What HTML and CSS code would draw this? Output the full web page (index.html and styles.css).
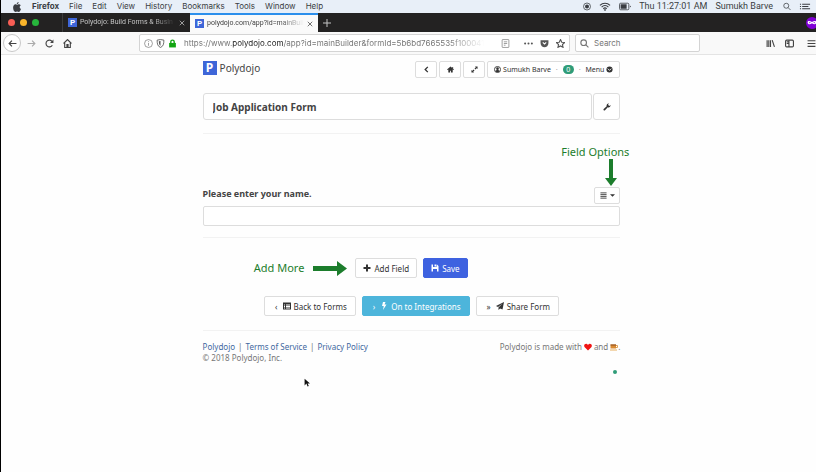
FILE: index.html
```html
<!DOCTYPE html>
<html lang="en">
<head>
  <meta charset="UTF-8" />
  <meta name="viewport" content="width=device-width, initial-scale=1.0" />
  <title>Polydojo - Form Builder</title>
  <link rel="stylesheet" href="styles.css">
</head>
<body>
  <!-- System menu bar -->
  <div class="menubar">
    <svg class="apple" viewBox="0 0 16 18"><path d="M11 0c0 2-1.500 4-3.500 4C7.500 2 9 .5 11 0zM8 5c1 0 2-1 3.500-1 1.300 0 2.500.7 3.200 1.800-2.800 1.700-2.300 5.500.5 6.700C14.300 15 13 18 11.200 18c-1.200 0-1.700-.7-3-.7s-1.800.7-3 .7C3 18 1 14.500 1 10.500 1 6.500 3 4 5.200 4 6.500 4 7.200 5 8 5z"/></svg>
    <b>Firefox</b>
    <span>File</span>
    <span>Edit</span>
    <span>View</span>
    <span>History</span>
    <span>Bookmarks</span>
    <span>Tools</span>
    <span>Window</span>
    <span>Help</span>
    <div class="menubar-right">
      <svg class="icon" viewBox="0 0 16 16"><circle cx="8" cy="8" r="7" fill="none" stroke="currentColor" stroke-width="1.500"/><circle cx="8" cy="8" r="4"/></svg>
      <svg class="icon wide" viewBox="0 0 20 16"><path d="M1 6c5-5 13-5 18 0M4 9c3.500-3.500 8.500-3.500 12 0M7 12c2-2 4-2 6 0" fill="none" stroke="currentColor" stroke-width="2"/><circle cx="10" cy="14" r="1.500"/></svg>
      <svg class="icon wide" viewBox="0 0 22 14"><rect x="1" y="1" width="17" height="12" rx="2" fill="none" stroke="currentColor" stroke-width="1.500"/><path d="M3 3h11v8H3zM20 5v4l2-2z"/></svg>
      <span>Thu 11:27:01 AM</span>
      <span class="user">Sumukh Barve</span>
      <svg class="icon" viewBox="0 0 16 16"><g fill="none" stroke="currentColor" stroke-width="1.500"><circle cx="6.500" cy="6.500" r="5"/><path d="M10 10l5 5"/></g></svg>
      <svg class="icon wide" viewBox="0 0 20 16"><path d="M1 3h2v2H1zM5 3h14v2H5zM1 7h2v2H1zM5 7h11v2H5zM1 11h2v2H1zM5 11h14v2H5z"/></svg>
    </div>
  </div>

  <!-- Browser tabs -->
  <div class="tabs">
    <div class="lights"><i class="red"></i><i class="yellow"></i><i class="green"></i></div>
    <div class="tab">
      <span class="favicon">P</span>
      <span class="tab-title">Polydojo: Build Forms &amp; Busin</span>
      <button class="close" aria-label="Close tab"><svg viewBox="0 0 8 8"><path d="M1 1l6 6M7 1L1 7"/></svg></button>
    </div>
    <div class="tab active">
      <span class="favicon">P</span>
      <span class="tab-title">polydojo.com/app?id=mainBuil</span>
      <button class="close" aria-label="Close tab"><svg viewBox="0 0 8 8"><path d="M1 1l6 6M7 1L1 7"/></svg></button>
    </div>
    <button class="new-tab" aria-label="New tab"><svg viewBox="0 0 8 8"><path d="M4 0v8M0 4h8"/></svg></button>
    <div class="private"><svg viewBox="0 0 16 8"><path d="M1 4c0-3 3-3 7-1 4-2 7-2 7 1s-4 4-7 1C5 8 1 7 1 4z" fill="#fff"/><circle cx="4.500" cy="4" r="1" fill="#8000d7"/><circle cx="11.500" cy="4" r="1" fill="#8000d7"/></svg></div>
  </div>

  <!-- Browser toolbar -->
  <div class="toolbar">
    <div class="nav">
      <button class="back" aria-label="Back"><svg class="icon line" viewBox="0 0 16 16"><path d="M15 8H2M7 3L2 8l5 5"/></svg></button>
      <button class="forward" aria-label="Forward"><svg class="icon line" viewBox="0 0 16 16"><path d="M1 8h13M9 3l5 5-5 5"/></svg></button>
      <button aria-label="Reload"><svg class="icon line" viewBox="0 0 16 16"><path d="M13 11a6 6 0 1 1 0-6"/><path d="M15 1v6H9z" fill="currentColor" stroke="none"/></svg></button>
      <button aria-label="Home"><svg class="icon line" viewBox="0 0 16 16"><path d="M1 8l7-7 7 7M3 7v8h10V7M7 15v-5h2v5"/></svg></button>
    </div>
    <div class="urlbar">
      <svg class="icon line thin" viewBox="0 0 16 16"><circle cx="8" cy="8" r="7"/><path d="M8 7v5M8 4v1.500"/></svg>
      <svg class="icon" viewBox="0 0 16 16"><path d="M2 2l6-1 6 1c0 7-1 11-6 13C3 13 2 9 2 2z" fill="none" stroke="currentColor" stroke-width="1.500"/><path d="M5 4l3-.5V12C6 11 5 8 5 4z"/></svg>
      <svg class="icon lock" viewBox="0 0 16 16"><path d="M2 7h12v8H2z"/><path d="M5 8V5a3 3 0 0 1 6 0v3" fill="none" stroke="currentColor" stroke-width="2.500"/></svg>
      <span class="url">https://www.<b>polydojo.com</b>/app?id=mainBuilder&amp;formId=5b6bd7665535f100041</span>
      <svg class="icon line thin reader" viewBox="0 0 16 16"><rect x="2" y="1" width="12" height="14" rx="1"/><path d="M5 5h6M5 8h6M5 11h3"/></svg>
      <svg class="icon" viewBox="0 0 16 16"><circle cx="2" cy="8" r="1.800"/><circle cx="8" cy="8" r="1.800"/><circle cx="14" cy="8" r="1.800"/></svg>
      <svg class="icon" viewBox="0 0 16 16"><path d="M1 2h14v5c0 10-14 10-14 0z"/><path d="M5 6l3 3 3-3" fill="none" stroke="#fff" stroke-width="2"/></svg>
      <svg class="icon line" viewBox="0 0 16 16"><path d="M8 1l2.200 4.700 5 .6-3.700 3.500 1 5L8 12.300 3.500 14.800l1-5L.8 6.300l5-.6z"/></svg>
    </div>
    <label class="search">
      <svg class="icon line" viewBox="0 0 16 16"><circle cx="6.500" cy="6.500" r="5"/><path d="M10 10l5 5"/></svg>
      <input type="text" placeholder="Search" aria-label="Search">
    </label>
    <div class="tools">
      <svg class="icon line" viewBox="0 0 16 16"><path d="M2 2v12M5 2v12M8 2v12M11 2l4 12"/></svg>
      <svg class="icon line" viewBox="0 0 16 16"><rect x="1" y="2" width="14" height="12" rx="2"/><path d="M7 2v12M3 5h3M3 8h3"/></svg>
      <svg class="icon line more" viewBox="0 0 16 16"><path d="M1 3h14M1 8h14M1 13h14"/></svg>
    </div>
  </div>

  <!-- Form builder -->
  <main>
    <header>
      <a class="brand" href="#"><span class="logo">P</span>Polydojo</a>
      <div class="header-buttons">
        <button class="btn small square" aria-label="Go back"><svg class="icon line bold" viewBox="0 0 16 16"><path d="M11 2L5 8l6 6"/></svg></button>
        <button class="btn small square" aria-label="Home"><svg class="icon" viewBox="0 0 16 16"><path d="M8 1l8 7-1 1-2-1v7H9v-4H7v4H3V8L1 9 0 8zM12 2h2v4l-2-2z"/></svg></button>
        <button class="btn small square" aria-label="Expand"><svg class="icon" viewBox="0 0 16 16"><path d="M9 1h6v6l-2-2-3 3-2-2 3-3zM1 15V9l2 2 3-3 2 2-3 3 2 2z"/></svg></button>
        <button class="btn small account">
          <svg class="icon" viewBox="0 0 16 16"><circle cx="8" cy="8" r="7" fill="none" stroke="currentColor" stroke-width="2"/><circle cx="8" cy="6" r="3"/><path d="M3 12c1-3 3-3 5-3s4 0 5 3c-3 3-7 3-10 0z"/></svg>
          <span>Sumukh Barve</span>
          <i>·</i>
          <span class="badge">0</span>
          <i>·</i>
          <span>Menu</span>
          <svg class="icon" viewBox="0 0 16 16"><circle cx="8" cy="8" r="7"/><path d="M4 6l4 4 4-4" fill="none" stroke="#fff" stroke-width="2"/></svg>
        </button>
      </div>
    </header>

    <div class="title-row">
      <input class="form-title" type="text" value="Job Application Form" aria-label="Form title">
      <button class="btn wrench" aria-label="Form settings"><svg class="icon" viewBox="0 0 16 16"><path d="M15 4a4 4 0 0 1-5.500 4.500L4 14.500a1.800 1.800 0 0 1-2.600-2.600l6-5.500A4 4 0 0 1 12 1l-2 2.500L12.500 6z"/></svg></button>
    </div>

    <section class="field">
      <div class="field-head">
        <label for="name">Please enter your name.</label>
        <div class="field-options">
          <div class="note note-options">
            <span>Field Options</span>
            <svg viewBox="0 0 12 27"><path d="M4 0h4v19h4l-6 8-6-8h4z"/></svg>
          </div>
          <button class="btn small options" aria-label="Field options">
            <svg class="icon line" viewBox="0 0 16 16"><path d="M1 2h14M1 6h14M1 10h14M1 14h14"/></svg>
            <svg class="caret" viewBox="0 0 8 4"><path d="M0 0h8L4 4z"/></svg>
          </button>
        </div>
      </div>
      <input id="name" class="answer" type="text">
    </section>

    <div class="actions">
      <div class="action-group">
        <div class="note note-add">
          <span>Add More</span>
          <svg viewBox="0 0 34 15"><path d="M0 5h24V0l10 7.500L24 15v-5H0z"/></svg>
        </div>
        <button class="btn"><svg class="icon" viewBox="0 0 16 16"><path d="M6 1h4v5h5v4h-5v5H6v-5H1V6h5z"/></svg>Add Field</button>
        <button class="btn save"><svg class="icon" viewBox="0 0 16 16"><path d="M1 1h3v5h7V1h1l3 3v11h-3v-5H4v5H1zM7 1h3v4H7z"/></svg>Save</button>
      </div>
    </div>

    <nav class="steps">
      <button class="btn step"><span>‹</span><svg class="icon" viewBox="0 0 16 16"><path d="M0 1h16v14H0zM2 5v2h2V5zm4 0v2h8V5zM2 8v2h2V8zm4 0v2h8V8zM2 11v2h2v-2zm4 0v2h8v-2z" fill-rule="evenodd"/></svg>Back to Forms</button>
      <button class="btn step next"><span>›</span><svg class="icon" viewBox="0 0 16 16"><path d="M6 0h5L9 5h4L6 16l1.500-8H4z"/></svg>On to Integrations</button>
      <button class="btn step"><span>»</span><svg class="icon" viewBox="0 0 16 16"><path d="M16 0l-3 15-5-2-3 3v-5l8-8-9 7-4-2z"/></svg>Share Form</button>
    </nav>

    <footer>
      <div>
        <div class="links"><a href="#">Polydojo</a><span>|</span><a href="#">Terms of Service</a><span>|</span><a href="#">Privacy Policy</a></div>
        <div>© 2018 Polydojo, Inc.</div>
      </div>
      <div class="made">
        Polydojo is made with
        <svg class="icon" viewBox="0 0 16 16"><path d="M8 15L1 8C-2 3 5-1 8 4c3-5 10-1 7 4z" fill="#f01414"/></svg>
        and
        <span class="coffee"><svg class="icon" viewBox="0 0 16 16"><path d="M1 3h11v8H1z" fill="#d98a32"/><path d="M12 5h3v4h-3" fill="none" stroke="#e0a050" stroke-width="2"/><path d="M1 3h11v2H1z" fill="#8a4a1c"/><path d="M0 13h14v2H0z" fill="#e8b060"/></svg>.</span>
      </div>
      <i class="status-dot"></i>
    </footer>
  </main>

  <svg class="cursor" viewBox="0 0 10 16"><path d="M1 1v11l3-3 2 5 2-1-2-4h4z"/></svg>
</body>
</html>
```
FILE: styles.css
```css
* {
  box-sizing: border-box;
}
body {
  margin: 0;
  min-height: 100vh;
  position: relative;
  border-left: 1px solid #000;
  background: #fefefe;
  color: #444;
  font-family: "Noto Sans", "Open Sans", sans-serif;
  font-size: 8px;
  line-height: 11px;
  overflow-x: hidden;
}
button, input {
  font: inherit;
  color: inherit;
}
button {
  padding: 0;
  border: none;
  background: none;
}
svg {
  display: block;
  flex: none;
  fill: currentColor;
}
.icon {
  width: 8px;
  height: 8px;
}
.icon.wide {
  width: 12px;
}
.line {
  fill: none;
  stroke: currentColor;
  stroke-width: 2;
}
.line.thin {
  stroke-width: 1;
}
.line.bold {
  stroke-width: 3;
}

/* System menu bar */
.menubar {
  display: flex;
  align-items: center;
  gap: 10px;
  height: 13px;
  padding: 0 5px 0 11px;
  background: #e8eff8;
  color: #3a3d42;
  font-family: Inter, sans-serif;
  white-space: nowrap;
}
.apple {
  width: 10px;
  height: 10px;
}
.menubar-right {
  display: flex;
  align-items: center;
  gap: 8px;
  margin-left: auto;
  font-family: Roboto, sans-serif;
  font-size: 9px;
}
.menubar-right .icon {
  height: 9px;
}
.menubar-right .user {
  margin-right: 2px;
}

/* Tabs */
.tabs {
  display: flex;
  height: 19px;
  background: #232222;
  color: #c4c4c4;
  font-family: Roboto, sans-serif;
  font-size: 7px;
  overflow: hidden;
}
.lights {
  display: flex;
  align-items: center;
  gap: 5px;
  width: 61px;
  padding-left: 7px;
}
.lights i {
  width: 7px;
  height: 7px;
  border-radius: 50%;
}
.red { background: #f95e55; }
.yellow { background: #fbb52b; }
.green { background: #27b53c; }
.tab {
  display: flex;
  align-items: center;
  gap: 3px;
  width: 128px;
  padding: 0 5px;
  border-left: 1px solid #3c3c3c;
}
.tab.active {
  border-left: none;
  border-top: 2px solid #2c8fec;
  background: #fafafa;
  color: #444;
}
.favicon, .logo {
  flex: none;
  background: #3e66d8;
  color: #fff;
  font-weight: bold;
  text-align: center;
}
.favicon {
  width: 9px;
  height: 9px;
  font-size: 8px;
  line-height: 9px;
}
.tab-title {
  flex: 1;
  overflow: hidden;
  white-space: nowrap;
  mask-image: linear-gradient(to right, #000 75%, transparent);
}
.close svg, .new-tab svg {
  width: 6px;
  height: 6px;
  stroke: currentColor;
}
.new-tab {
  padding: 0 5px;
}
.new-tab svg {
  width: 8px;
  height: 8px;
}
.private {
  align-self: center;
  display: flex;
  align-items: center;
  justify-content: center;
  width: 12px;
  height: 12px;
  margin: 0 -2px 0 auto;
  border-radius: 50%;
  background: #8000d7;
}
.private svg {
  width: 10px;
  height: 5px;
}

/* Toolbar */
.toolbar {
  display: flex;
  align-items: center;
  gap: 5px;
  height: 23px;
  border-bottom: 1px solid #e4e4e4;
  background: #f9f9f9;
  font-family: Inter, sans-serif;
}
.toolbar .icon {
  width: 9px;
  height: 9px;
}
.nav {
  display: flex;
  align-items: center;
  gap: 9px;
  width: 133px;
  padding-left: 2px;
}
.back {
  display: flex;
  align-items: center;
  justify-content: center;
  width: 18px;
  height: 18px;
  margin-right: -3px;
  border: 1px solid #c8c8c8;
  border-radius: 50%;
  background: #fff;
}
.forward {
  color: #aaa;
}
.urlbar, .search {
  display: flex;
  align-items: center;
  height: 18px;
  border: 1px solid #d4d4d4;
  border-radius: 2px;
  background: #fff;
}
.urlbar {
  flex: 1;
  gap: 7px;
  min-width: 0;
  padding: 0 4px;
  color: #555;
}
.urlbar .icon:nth-child(-n+2) {
  margin-right: -4px;
}
.lock {
  color: #12a512;
}
.url {
  flex: 1;
  max-width: 300px;
  overflow: hidden;
  white-space: nowrap;
  color: #777;
  mask-image: linear-gradient(to right, #000 88%, transparent);
}
.url b {
  font-weight: normal;
  color: #222;
}
.urlbar .reader {
  margin: 0 7px 0 auto;
}
.search {
  gap: 5px;
  width: 125px;
  padding: 0 4px;
  color: #777;
}
.search input {
  flex: 1;
  min-width: 0;
  padding: 0;
  border: none;
  background: none;
  outline: none;
}
.search input::placeholder {
  color: #777;
}
.tools {
  display: flex;
  align-items: center;
  justify-content: flex-end;
  gap: 10px;
  width: 111px;
}
.more {
  margin-left: 3px;
}

/* Builder */
main {
  width: 52%;
  min-width: 417px;
  max-width: 720px;
  margin: 0 auto;
  padding: 6px 0 0 6px;
}
header {
  display: flex;
  justify-content: space-between;
}
.brand {
  display: flex;
  gap: 3px;
  height: 14px;
  color: #444;
  font-size: 10px;
  line-height: 14px;
  text-decoration: none;
}
.logo {
  width: 14px;
  height: 14px;
  font-size: 12px;
}
.header-buttons {
  display: flex;
  gap: 2px;
}
.btn {
  display: flex;
  align-items: center;
  justify-content: center;
  gap: 3px;
  height: 20px;
  padding: 0 7px;
  border: 1px solid #ddd;
  border-radius: 2px;
  background: #fff;
  color: #333;
  white-space: nowrap;
}
.small {
  height: 17px;
  font-size: 7px;
}
.square {
  width: 22px;
}
.small .icon {
  width: 7px;
  height: 7px;
}
.account {
  gap: 2px;
  padding: 0 6px;
}
.account i {
  margin: 0 3px;
  color: #999;
}
.badge {
  width: 11px;
  height: 9px;
  border-radius: 5px;
  background: #2f9c78;
  color: #fff;
  line-height: 9px;
}
.title-row {
  display: flex;
  gap: 1px;
  padding: 15px 0 13px;
  border-bottom: 1px solid #f2f2f2;
}
.form-title {
  flex: 1;
  min-width: 0;
  height: 27px;
  padding: 0 9px;
  border: 1px solid #ddd;
  border-radius: 3px;
  background: #fff;
  font-size: 10px;
  font-weight: bold;
}
.wrench {
  width: 27px;
  height: 27px;
  border-radius: 3px;
}
.field {
  padding: 53px 0 11px;
  border-bottom: 1px solid #f2f2f2;
}
.field-head {
  display: flex;
  justify-content: space-between;
  margin-bottom: 2px;
}
.field-head label {
  font-size: 9px;
  font-weight: bold;
  line-height: 14px;
}
.field-options {
  position: relative;
}
.options {
  width: 26px;
}
.caret {
  width: 5px;
  height: 3px;
}
.answer {
  display: block;
  width: 100%;
  height: 20px;
  padding: 0 6px;
  border: 1px solid #ddd;
  border-radius: 2px;
  background: #fff;
}

/* Green tutorial notes */
.note {
  position: absolute;
  color: #1c7d2c;
  font-size: 11px;
  line-height: 14px;
  white-space: nowrap;
}
.note-options {
  right: -9px;
  bottom: 18px;
}
.note-options svg {
  width: 12px;
  height: 27px;
  margin: 0 12px 0 auto;
}
.note-add {
  display: flex;
  align-items: center;
  gap: 9px;
  right: 100%;
  height: 20px;
  margin-right: 8px;
}
.note-add svg {
  width: 34px;
  height: 15px;
}

.actions {
  display: flex;
  justify-content: center;
  padding: 20px 0 18px;
}
.action-group {
  display: flex;
  gap: 6px;
  position: relative;
}
.save {
  border-color: #3e62e0;
  background: #3e62e0;
  color: #fff;
}
.steps {
  display: flex;
  justify-content: center;
  gap: 6px;
  padding-bottom: 14px;
  border-bottom: 1px solid #f2f2f2;
}
.step {
  padding: 0 8px;
}
.step span {
  margin: 0 2px;
}
.next {
  border-color: #4db5db;
  background: #4db5db;
  color: #fff;
}
footer {
  display: flex;
  justify-content: space-between;
  position: relative;
  padding-top: 10px;
  color: #777;
}
footer a {
  color: #41689f;
  text-decoration: none;
}
.links span {
  margin: 0 3px;
}
.made, .coffee {
  display: flex;
  height: 11px;
  align-items: center;
}
.made {
  gap: 2px;
}
.status-dot {
  position: absolute;
  right: 3px;
  bottom: -11px;
  width: 4px;
  height: 4px;
  border-radius: 50%;
  background: #2f9c78;
}
.cursor {
  position: absolute;
  left: 303px;
  top: 378px;
  width: 6px;
  height: 10px;
  fill: #111;
}
```
